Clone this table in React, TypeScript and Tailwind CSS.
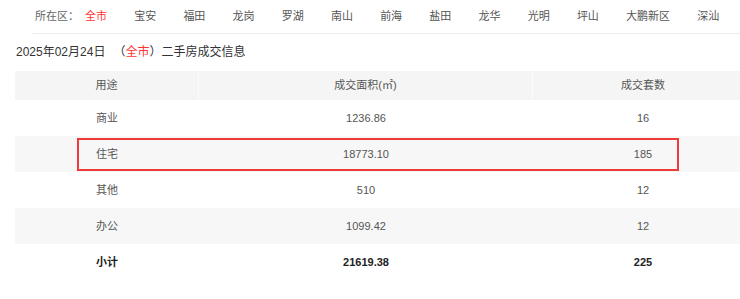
const districts = [
  "全市",
  "宝安",
  "福田",
  "龙岗",
  "罗湖",
  "南山",
  "前海",
  "盐田",
  "龙华",
  "光明",
  "坪山",
  "大鹏新区",
  "深汕",
];

type Row = { use: string; area: string; count: string };

const rows: Row[] = [
  { use: "商业", area: "1236.86", count: "16" },
  { use: "住宅", area: "18773.10", count: "185" },
  { use: "其他", area: "510", count: "12" },
  { use: "办公", area: "1099.42", count: "12" },
];

const font = {
  fontFamily: '"Liberation Sans", "Noto Sans CJK SC", sans-serif',
};

export default function App() {
  return (
    <div
      className="relative h-[299px] w-[740px] overflow-hidden bg-white text-[#555]"
      style={font}
    >
      {/* district nav */}
      <div className="ml-[32px] flex h-[34px] items-center border-b border-[#ededed] pl-[3px] text-[11px]">
        <span className="mr-[6px] text-[#666]">所在区：</span>
        <div className="flex gap-[27.2px]">
          {districts.map((d, i) => (
            <span
              key={d}
              className={i === 0 ? "text-[#ff3333]" : "text-[#555]"}
            >
              {d}
            </span>
          ))}
        </div>
      </div>

      <div className="flex h-[36px] items-center pl-[16px] text-[12px] text-[#333]">
        <span>2025年02月24日</span>
        <span className="ml-[8px]">（</span>
        <span className="text-[#ff3333]">全市</span>
        <span>）二手房成交信息</span>
      </div>

      <div className="ml-[15px] mt-[1px] w-[738px] text-[11px]">
        <div className="flex h-[29px] items-center bg-[#f5f5f5]">
          <div className="flex h-full w-[184px] items-center justify-center border-r border-[#fbfbfb]">
            用途
          </div>
          <div className="flex h-full w-[334px] items-center justify-center border-r border-[#fbfbfb]">
            成交面积(㎡)
          </div>
          <div className="flex h-full flex-1 items-center justify-center">
            成交套数
          </div>
        </div>
        {rows.map((r, i) => (
          <div
            key={r.use}
            className={
              "flex h-[36px] items-center " +
              (i % 2 === 1 ? "bg-[#f7f7f7]" : "bg-white")
            }
          >
            <div className="w-[184px] text-center">{r.use}</div>
            <div className="w-[334px] text-center">{r.area}</div>
            <div className="flex-1 text-center">{r.count}</div>
          </div>
        ))}
        <div className="flex h-[36px] items-center font-bold text-[#222]">
          <div className="w-[184px] text-center">小计</div>
          <div className="w-[334px] text-center">21619.38</div>
          <div className="flex-1 text-center">225</div>
        </div>
      </div>

      {/* highlight annotation */}
      <div className="pointer-events-none absolute left-[77px] top-[138px] h-[33px] w-[602px] border-2 border-[#f03a3a]" />
    </div>
  );
}
